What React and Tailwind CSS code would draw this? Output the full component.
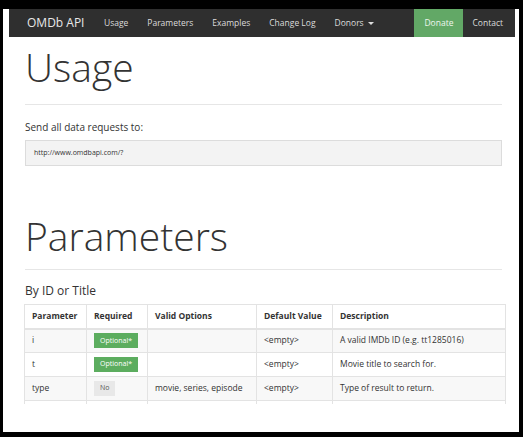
import React from 'react';

const navLinks = ['Usage', 'Parameters', 'Examples', 'Change Log'];

const rows = [
  { p: 'i', req: 'opt', opts: '', def: '<empty>', desc: 'A valid IMDb ID (e.g. tt1285016)' },
  { p: 't', req: 'opt', opts: '', def: '<empty>', desc: 'Movie title to search for.' },
  { p: 'type', req: 'no', opts: 'movie, series, episode', def: '<empty>', desc: 'Type of result to return.' },
  { p: '', req: '', opts: '', def: '', desc: '' },
];

const Navbar = () => (
  <nav className="flex items-stretch h-[28px] bg-[#2f2f2f] text-[#dcdcdc] mx-[6px] mr-[4px]">
    <span className="pl-[18px] pr-[10px] flex items-center text-[12px] text-[#e8e8e8]">OMDb API</span>
    {navLinks.map((l) => (
      <span key={l} className="px-[9.5px] flex items-center text-[8.5px]">{l}</span>
    ))}
    <span className="px-[9.5px] flex items-center gap-[4px] text-[8.5px]">
      Donors
      <span className="w-0 h-0 border-x-[3px] border-x-transparent border-t-[3px] border-t-[#dcdcdc]" />
    </span>
    <span className="ml-auto px-[10px] flex items-center text-[8.5px] bg-[#62a866] text-[#eef6ee]">Donate</span>
    <span className="px-[9px] pr-[12px] flex items-center text-[8.5px]">Contact</span>
  </nav>
);

const Badge = ({ kind }) => {
  if (kind === 'opt')
    return <span className="inline-flex items-center h-[15px] px-[6px] bg-[#5cad5f] text-white text-[7px]">Optional*</span>;
  if (kind === 'no')
    return <span className="inline-flex items-center h-[15px] px-[6px] bg-[#e8e8e8] text-[#555] text-[7px]">No</span>;
  return null;
};

export default function App() {
  return (
    <div className="h-[437px] bg-black pt-[9px] pl-[3px] pr-[4px] pb-[5px]" style={{ fontFamily: '"Open Sans", sans-serif' }}>
      <div className="h-full bg-white overflow-hidden">
        <Navbar />
        <div className="pl-[22px] pr-[17px] text-[#333]">
          <h1 className="text-[39px] font-light leading-none mt-[9.5px] text-[#333]">Usage</h1>
          <div className="border-b border-[#e6e6e6] mt-[18.5px]" />
          <p className="text-[10px] leading-[15px] mt-[14.5px]">Send all data requests to:</p>
          <div className="mt-[5.5px] h-[26px] flex items-center px-[8px] bg-[#f3f3f3] border border-[#dcdcdc] text-[7px] text-[#333]">
            http://www.omdbapi.com/?
          </div>
          <h1 className="text-[39px] font-light leading-none mt-[49.5px] text-[#333]">Parameters</h1>
          <div className="border-b border-[#e6e6e6] mt-[14.5px]" />
          <h3 className="text-[12px] leading-[19.5px] mt-[11px] text-[#333]">By ID or Title</h3>
          <div className="mt-[3.5px] ml-[-1px] mr-[-4px] h-[100px] overflow-hidden">
            <table className="w-full table-fixed border-collapse text-[8.5px] text-[#333]">
              <colgroup>
                <col className="w-[62px]" />
                <col className="w-[61px]" />
                <col className="w-[109px]" />
                <col className="w-[76px]" />
                <col />
              </colgroup>
              <thead>
                <tr className="h-[24px]">
                  {['Parameter', 'Required', 'Valid Options', 'Default Value', 'Description'].map((h) => (
                    <th key={h} className="border border-[#e3e3e3] border-b-2 text-left font-bold px-[7px] whitespace-nowrap">{h}</th>
                  ))}
                </tr>
              </thead>
              <tbody>
                {rows.map((r, i) => (
                  <tr key={i} className={`h-[24px] ${i % 2 === 0 ? 'bg-[#f8f8f8]' : 'bg-white'}`}>
                    <td className="border border-[#e3e3e3] px-[7px] whitespace-nowrap">{r.p}</td>
                    <td className="border border-[#e3e3e3] px-[7px]"><Badge kind={r.req} /></td>
                    <td className="border border-[#e3e3e3] px-[7px] whitespace-nowrap">{r.opts}</td>
                    <td className="border border-[#e3e3e3] px-[7px] whitespace-nowrap">{r.def}</td>
                    <td className="border border-[#e3e3e3] px-[7px] whitespace-nowrap">{r.desc}</td>
                  </tr>
                ))}
              </tbody>
            </table>
          </div>
        </div>
      </div>
    </div>
  );
}
